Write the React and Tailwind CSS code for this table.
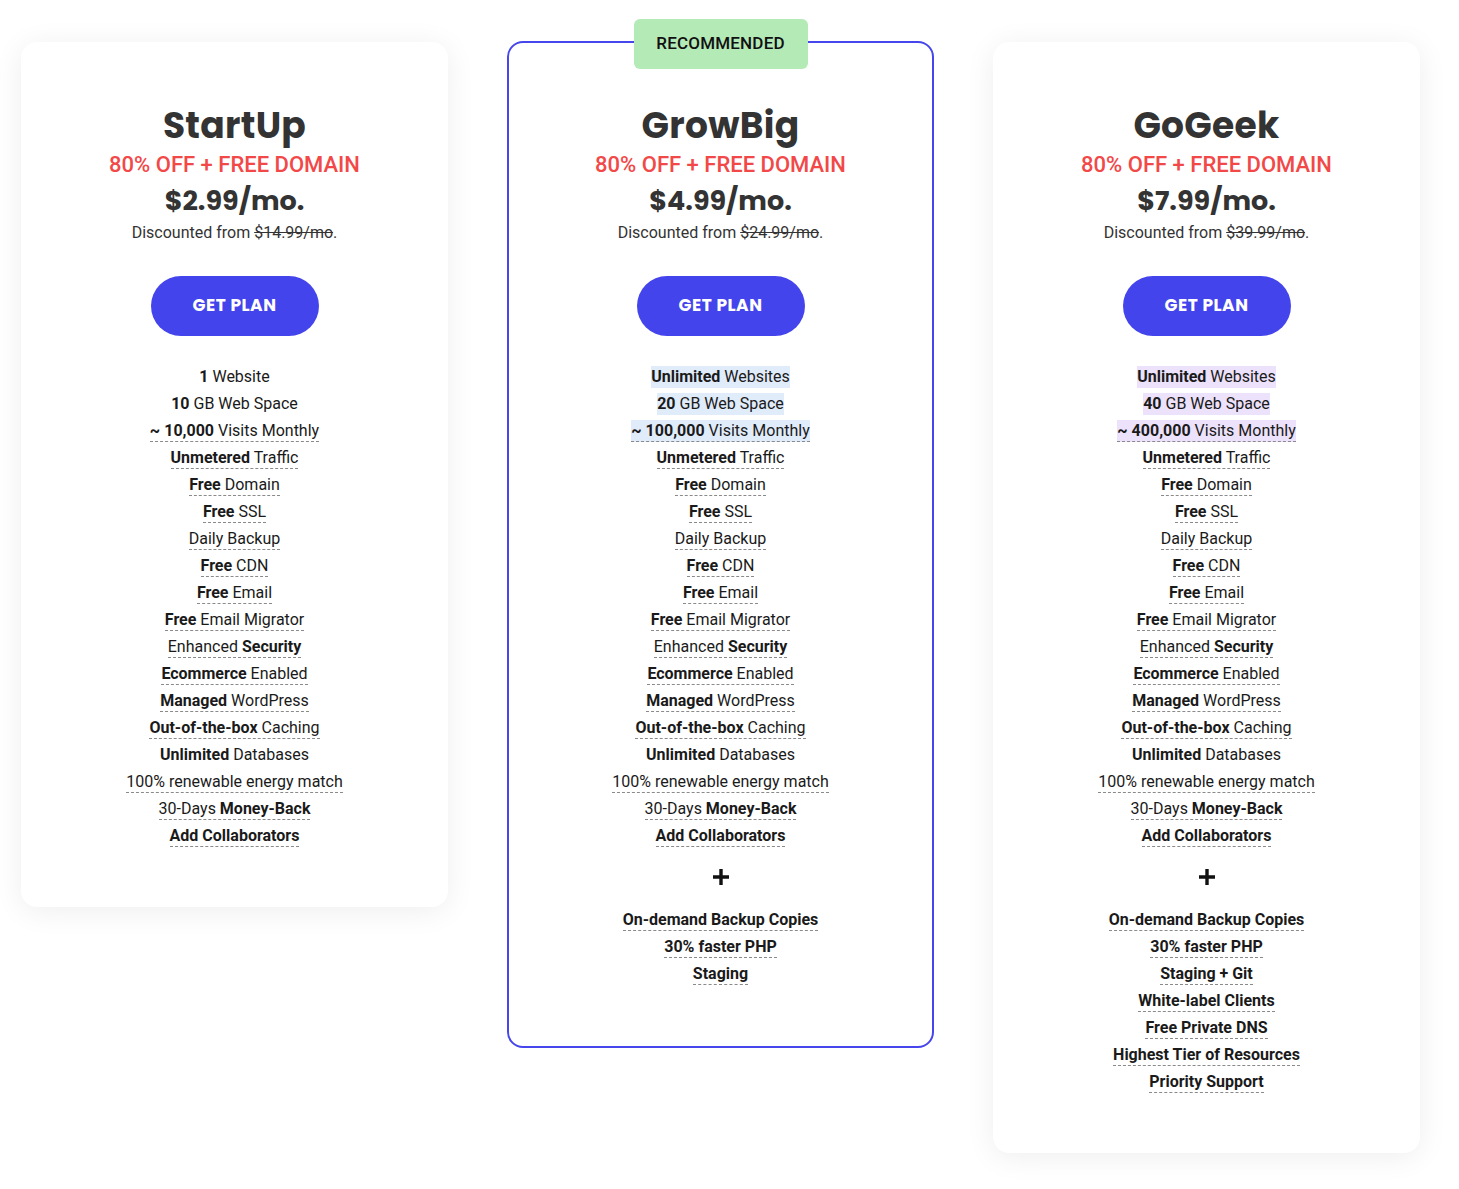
import React from 'react';

const base = [
  { parts: [['b', '1'], ['', ' Website']], plain: true },
  { parts: [['b', '10'], ['', ' GB Web Space']], plain: true },
  { parts: [['b', '~ 10,000'], ['', ' Visits Monthly']] },
  { parts: [['b', 'Unmetered'], ['', ' Traffic']] },
  { parts: [['b', 'Free'], ['', ' Domain']] },
  { parts: [['b', 'Free'], ['', ' SSL']] },
  { parts: [['', 'Daily Backup']] },
  { parts: [['b', 'Free'], ['', ' CDN']] },
  { parts: [['b', 'Free'], ['', ' Email']] },
  { parts: [['b', 'Free'], ['', ' Email Migrator']] },
  { parts: [['', 'Enhanced '], ['b', 'Security']] },
  { parts: [['b', 'Ecommerce'], ['', ' Enabled']] },
  { parts: [['b', 'Managed'], ['', ' WordPress']] },
  { parts: [['b', 'Out-of-the-box'], ['', ' Caching']] },
  { parts: [['b', 'Unlimited'], ['', ' Databases']], plain: true },
  { parts: [['', '100% renewable energy match']] },
  { parts: [['', '30-Days '], ['b', 'Money-Back']] },
  { parts: [['b', 'Add Collaborators']] },
];

const withTop = (top) => [...top, ...base.slice(3)];

const plans = [
  {
    name: 'StartUp',
    price: '$2.99/mo.',
    old: '$14.99/mo',
    highlight: '',
    features: base,
    extras: [],
  },
  {
    name: 'GrowBig',
    price: '$4.99/mo.',
    old: '$24.99/mo',
    recommended: true,
    highlight: 'bg-[#e1ecfb]',
    features: withTop([
      { parts: [['b', 'Unlimited'], ['', ' Websites']], hl: true, plain: true },
      { parts: [['b', '20'], ['', ' GB Web Space']], hl: true, plain: true },
      { parts: [['b', '~ 100,000'], ['', ' Visits Monthly']], hl: true },
    ]),
    extras: ['On-demand Backup Copies', '30% faster PHP', 'Staging'],
  },
  {
    name: 'GoGeek',
    price: '$7.99/mo.',
    old: '$39.99/mo',
    highlight: 'bg-[#ede2fb]',
    features: withTop([
      { parts: [['b', 'Unlimited'], ['', ' Websites']], hl: true, plain: true },
      { parts: [['b', '40'], ['', ' GB Web Space']], hl: true, plain: true },
      { parts: [['b', '~ 400,000'], ['', ' Visits Monthly']], hl: true },
    ]),
    extras: [
      'On-demand Backup Copies',
      '30% faster PHP',
      'Staging + Git',
      'White-label Clients',
      'Free Private DNS',
      'Highest Tier of Resources',
      'Priority Support',
    ],
  },
];

const Feature = ({ item, highlight }) => (
  <li className="h-[27px] flex justify-center">
    <span
      className={`leading-[21px] h-[22px] ${item.plain ? '' : 'border-b border-dashed border-[#8a8a8a]'} ${
        item.hl ? highlight : ''
      }`}
    >
      {item.parts.map(([w, t], i) => (
        <span key={i} className={w === 'b' ? 'font-bold' : ''}>
          {t}
        </span>
      ))}
    </span>
  </li>
);

const PlanCard = ({ plan }) => (
  <div
    className={`relative w-[427px] shrink-0 rounded-2xl bg-white text-center ${
      plan.recommended
        ? 'border-2 border-[#4646ec] pt-[62px] pb-[56px] -mt-px'
        : 'shadow-[0_4px_30px_rgba(0,0,0,0.07)] pt-[63px] pb-[55px]'
    }`}
  >
    {plan.recommended && (
      <div className="absolute left-1/2 -translate-x-1/2 -top-[24px] h-[50px] w-[174px] rounded-md bg-[#b4eab6] flex items-center justify-center text-[17px] text-[#111] font-medium tracking-[0.2px]">
        RECOMMENDED
      </div>
    )}
    <h2 className="font-['Poppins','Inter',sans-serif] text-[36px] leading-[42px] font-bold text-[#333] tracking-[0.3px]">
      {plan.name}
    </h2>
    <div className="mt-[3px] text-[22px] leading-[30px] font-medium text-[#f24848]">
      80% OFF + FREE DOMAIN
    </div>
    <div className="mt-[1px] font-['Poppins','Inter',sans-serif] text-[27px] leading-[40px] font-bold text-[#333]">
      {plan.price}
    </div>
    <div className="text-[16px] leading-[24px] text-[#333]">
      Discounted from <span className="line-through">{plan.old}</span>.
    </div>
    <button className="mt-[31px] h-[60px] w-[168px] rounded-full bg-[#4444ec] text-white font-['Poppins','Inter',sans-serif] font-bold text-[17px] tracking-[0.5px]">
      GET PLAN
    </button>
    <ul className="mt-[30px] text-[16px] text-[#1a1a1a]">
      {plan.features.map((f, i) => (
        <Feature key={i} item={f} highlight={plan.highlight} />
      ))}
    </ul>
    {plan.extras.length > 0 && (
      <>
        <div className="mt-[10px] h-[30px] flex items-center justify-center">
          <svg width="20" height="20" viewBox="0 0 20 20">
            <path d="M10 2v16M2 10h16" stroke="#111" strokeWidth="3.4" />
          </svg>
        </div>
        <ul className="mt-[17px] text-[16px] text-[#1a1a1a]">
          {plan.extras.map((t, i) => (
            <Feature key={i} item={{ parts: [['b', t]] }} highlight="" />
          ))}
        </ul>
      </>
    )}
  </div>
);

export default function App() {
  return (
    <div className="min-h-[1189px] bg-white font-['Roboto','Liberation_Sans',sans-serif]">
      <div className="flex items-start gap-[59px] pl-[21px] pt-[42px]">
        {plans.map((p) => (
          <PlanCard key={p.name} plan={p} />
        ))}
      </div>
    </div>
  );
}
